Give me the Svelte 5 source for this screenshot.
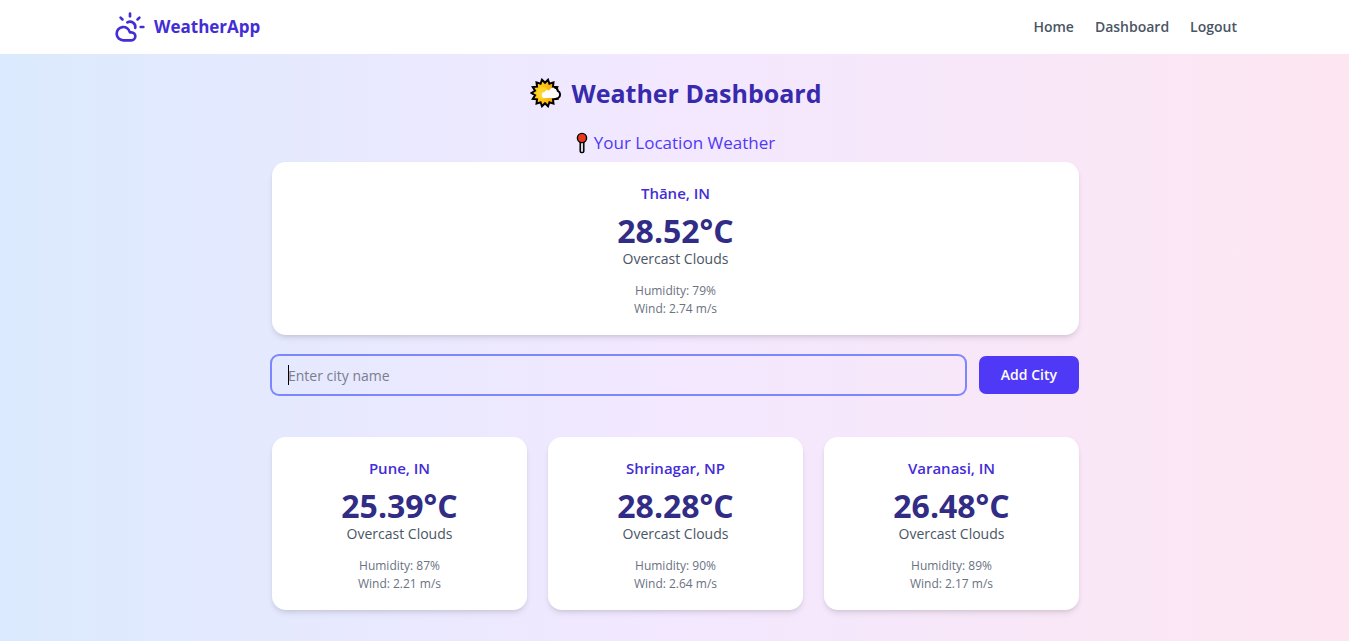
<script>
  import { onMount } from 'svelte';

  const here = { city: 'Thāne, IN', temp: '28.52', sky: 'Overcast Clouds', humidity: 79, wind: '2.74' };
  const cities = [
    { city: 'Pune, IN', temp: '25.39', sky: 'Overcast Clouds', humidity: 87, wind: '2.21' },
    { city: 'Shrinagar, NP', temp: '28.28', sky: 'Overcast Clouds', humidity: 90, wind: '2.64' },
    { city: 'Varanasi, IN', temp: '26.48', sky: 'Overcast Clouds', humidity: 89, wind: '2.17' }
  ];

  // Sun outline: alternating outer and inner points around the centre
  const rays = Array.from({ length: 28 }, (_, i) => {
    const r = i % 2 ? 10.2 : 13.6;
    const a = (i * Math.PI) / 14 - Math.PI / 2 + Math.PI / 14;
    return `${(15 + r * Math.cos(a)).toFixed(2)},${(15 + r * Math.sin(a)).toFixed(2)}`;
  }).join(' ');

  let name = $state('');
  let field;
  onMount(() => field.focus());
</script>

{#snippet card(w)}
  <article class="card">
    <h3>{w.city}</h3>
    <p class="temp">{w.temp}°C</p>
    <p class="sky">{w.sky}</p>
    <div class="details">
      <p>Humidity: {w.humidity}%</p>
      <p>Wind: {w.wind} m/s</p>
    </div>
  </article>
{/snippet}

<div class="page">
  <header>
    <nav>
      <a class="brand" href="#home">
        <svg width="32" height="32" viewBox="0 0 24 24" fill="none" stroke="currentColor" stroke-width="2" stroke-linecap="round" stroke-linejoin="round" aria-hidden="true">
          <path d="M12 2v2" />
          <path d="m4.93 4.93 1.41 1.41" />
          <path d="M20 12h2" />
          <path d="m19.07 4.93-1.41 1.41" />
          <path d="M15.947 12.65a4 4 0 0 0-5.925-4.128" />
          <path d="M13 22H7a5 5 0 1 1 4.9-6H13a3 3 0 0 1 0 6Z" />
        </svg>
        WeatherApp
      </a>
      <div class="links">
        <a href="#home">Home</a>
        <a href="#dashboard">Dashboard</a>
        <a href="#logout">Logout</a>
      </div>
    </nav>
  </header>

  <main>
    <h1>
      <svg width="32" height="30" viewBox="0 0 32 30" aria-hidden="true">
        <defs>
          <linearGradient id="sun" x1="0" y1="0" x2="1" y2="0">
            <stop offset="0" stop-color="#ffd21c" />
            <stop offset="0.35" stop-color="#ffc814" />
            <stop offset="1" stop-color="#f59a0c" />
          </linearGradient>
        </defs>
        <polygon points={rays} fill="url(#sun)" stroke="#000" stroke-width="2" stroke-linejoin="miter" />
        <circle cx="13" cy="15" r="6" fill="#ffe14a" opacity="0.5" />
        <path d="M15 20a3 3 0 0 1-.4-6 3.6 3.6 0 0 1 4.4-1.6 4.4 4.4 0 0 1 8-.2 3.8 3.8 0 0 1 .6 7.8Z" fill="#fff" />
        <path d="M24.8 9.6a3.8 3.8 0 0 1 3 3.2 4.2 4.2 0 0 1 .2 7.4L25.4 21" fill="none" stroke="#000" stroke-width="2" stroke-linecap="round" />
      </svg>
      Weather Dashboard
    </h1>

    <section>
      <h2>
        <svg width="12" height="22" viewBox="0 0 12 22" aria-hidden="true">
          <rect x="4.2" y="9" width="3.6" height="11.6" rx="1.4" fill="#d5d8df" stroke="#000" stroke-width="1.5" />
          <circle cx="6" cy="6" r="4.6" fill="#e8391d" stroke="#000" stroke-width="1.4" />
        </svg>
        Your Location Weather
      </h2>
      {@render card(here)}
    </section>

    <form onsubmit={(e) => e.preventDefault()}>
      <div class="field" class:empty={!name}>
        <input type="text" placeholder="Enter city name" aria-label="City name" bind:value={name} bind:this={field} />
      </div>
      <button type="submit">Add City</button>
    </form>

    <div class="grid">
      {#each cities as w}
        {@render card(w)}
      {/each}
    </div>
  </main>
</div>

<style>
  :global(body) {
    margin: 0;
  }
  .page {
    min-height: 100vh;
    display: flex;
    flex-direction: column;
    font-family: 'Segoe UI', 'Open Sans', 'Noto Sans', sans-serif;
    font-size: 14px;
    line-height: 22px;
    background: linear-gradient(to right in oklab, #dbeafe, #f3e8ff, #fde6f1);
  }
  * {
    box-sizing: border-box;
  }
  h1, h2, h3, p {
    margin: 0;
  }
  a {
    text-decoration: none;
    color: inherit;
  }
  header {
    background: #fff;
  }
  nav {
    max-width: 1151px;
    margin: 0 auto;
    padding: 11px 13px 11px 15px;
    display: flex;
    align-items: center;
    justify-content: space-between;
  }
  .brand {
    display: flex;
    align-items: center;
    gap: 8px;
    font-size: 17px;
    font-weight: 700;
    color: #432dd7;
  }
  .links {
    display: flex;
    gap: 21px;
    font-weight: 600;
    color: #4a5565;
  }
  main {
    width: 100%;
    max-width: 835px;
    margin: 0 auto;
    padding: 22px 13px 30px 15px;
  }
  h1 {
    display: flex;
    align-items: center;
    justify-content: center;
    gap: 10px;
    margin-bottom: 21px;
    font-size: 25px;
    line-height: 34px;
    font-weight: 700;
    color: #372aac;
  }
  h2 {
    display: flex;
    align-items: center;
    justify-content: center;
    gap: 6px;
    margin-bottom: 8px;
    font-size: 17px;
    line-height: 23px;
    font-weight: 500;
    color: #4f39f6;
  }
  .card {
    padding: 21px 22px 17px;
    border-radius: 14px;
    background: #fff;
    text-align: center;
    box-shadow: 0 4px 6px -1px rgb(0 0 0 / 0.1), 0 2px 4px -2px rgb(0 0 0 / 0.1);
  }
  h3 {
    margin-bottom: 11px;
    font-size: 15px;
    line-height: 20px;
    font-weight: 600;
    color: #432dd7;
  }
  .temp {
    font-size: 32px;
    line-height: 34px;
    font-weight: 700;
    color: #312c85;
  }
  .sky {
    line-height: 22px;
    color: #4a5565;
  }
  .details {
    margin-top: 12px;
    font-size: 12px;
    line-height: 18px;
    color: #6a7282;
  }
  form {
    display: flex;
    gap: 14px;
    margin: 21px 0 43px;
  }
  .field {
    position: relative;
    flex: 1;
    min-width: 0;
  }
  /* Text cursor of the empty, focused field */
  .field.empty:focus-within::after {
    content: '';
    position: absolute;
    left: 16px;
    top: 9px;
    width: 1px;
    height: 20px;
    background: #000;
  }
  .field.empty input {
    caret-color: transparent;
  }
  input,
  button {
    height: 38px;
    border: 0;
    border-radius: 7px;
    font: inherit;
  }
  input {
    display: block;
    width: 100%;
    padding: 0 16px;
    background: transparent;
    color: #1e2939;
    box-shadow: 0 0 0 1px #d1d5dc;
    outline: none;
  }
  input:focus {
    box-shadow: 0 0 0 2px #7c86ff;
  }
  input::placeholder {
    color: #7a7d8e;
    opacity: 1;
  }
  button {
    padding: 0 22px;
    background: #4f39f6;
    color: #fff;
    font-weight: 600;
  }
  .grid {
    display: grid;
    grid-template-columns: repeat(3, 1fr);
    gap: 21px;
  }
  @media (max-width: 640px) {
    .grid {
      grid-template-columns: 1fr;
    }
  }
</style>
